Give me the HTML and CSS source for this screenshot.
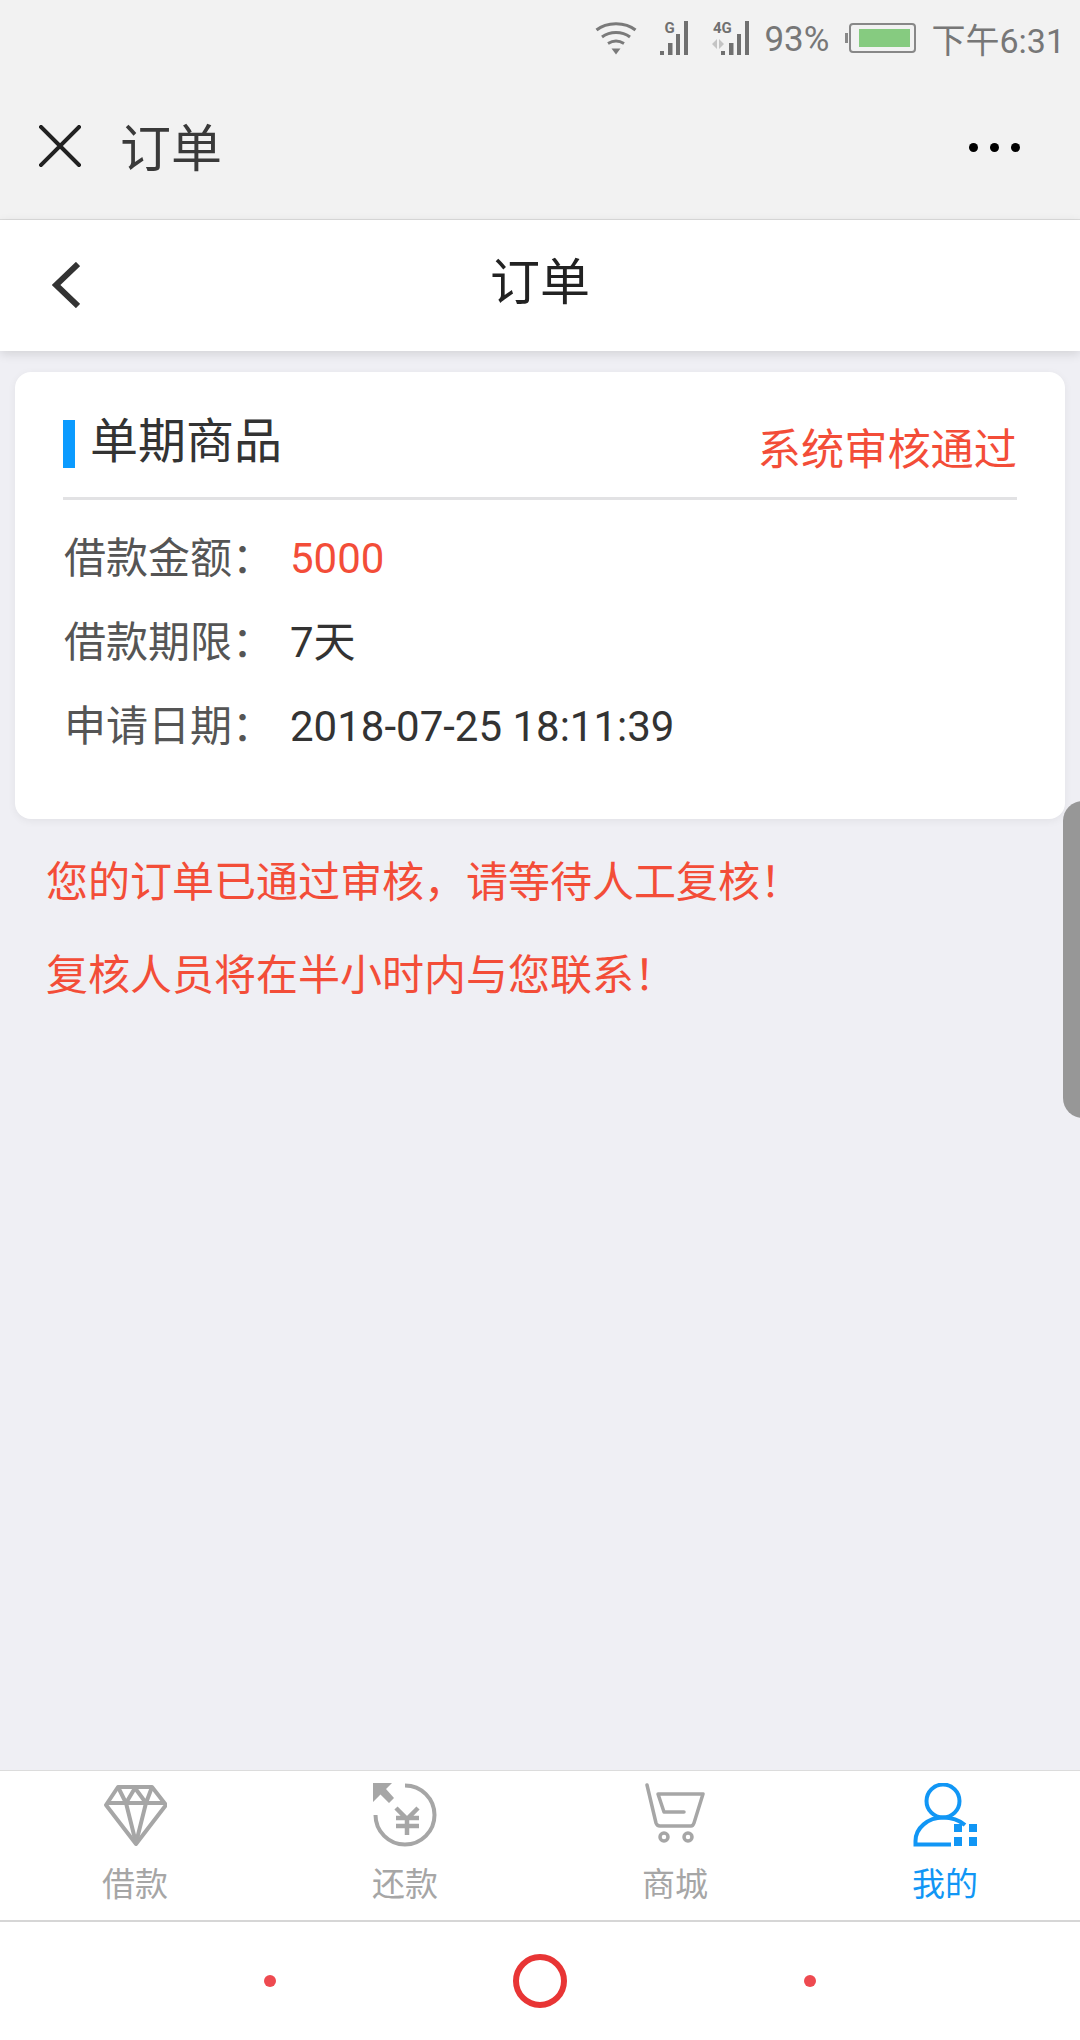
FILE: index.html
```html
<!DOCTYPE html>
<html lang="zh-CN">
<head>
  <meta charset="UTF-8" />
  <title>订单</title>
  <link rel="stylesheet" href="styles.css">
</head>
<body>
  <div class="phone">
    <div class="statusbar">
      <svg class="ic-wifi" width="42" height="34" viewBox="0 0 42 34" fill="none" stroke="#7a7a7a" stroke-width="3">
        <path d="M1.500 9C11.500 .5 30.500 .5 40.500 9"/>
        <path d="M7 16C15 10 27 10 35 16"/>
        <path d="M13 22.500C18 19.500 24 19.500 29 22.500"/>
        <path d="M16.500 27.500H25.500L21 33.500Z" fill="#7a7a7a" stroke="none"/>
      </svg>
      <svg class="ic-sig ic-sig1" width="28" height="38" viewBox="0 -4 28 38" fill="#707070">
        <text x="4.500" y="12" class="sig-text">G</text>
        <rect x="0" y="30" width="4" height="4"/>
        <rect x="8" y="22" width="4.500" height="12"/>
        <rect x="16" y="13" width="4" height="21"/>
        <rect x="24" y="0" width="4" height="34"/>
      </svg>
      <svg class="ic-sig ic-sig2" width="37" height="38" viewBox="0 -4 37 38" fill="#707070">
        <text x="1" y="12" class="sig-text">4G</text>
        <path d="M5 18V28L0 23ZM7 18L12 23L7 28Z" fill="#c4c4c4"/>
        <rect x="9" y="30" width="4" height="4"/>
        <rect x="17" y="22" width="4.500" height="12"/>
        <rect x="25" y="13" width="4" height="21"/>
        <rect x="33" y="0" width="4" height="34"/>
      </svg>
      <span class="st-pct">93%</span>
      <div class="battery"><div class="battery-fill"></div></div>
      <span class="st-time">下午6:31</span>
    </div>

    <div class="appbar">
      <svg class="ic-close" width="42" height="42" viewBox="0 0 42 42" stroke="#222" stroke-width="4" stroke-linecap="square">
        <path d="M2 2L40 40M40 2L2 40"/>
      </svg>
      <span class="appbar-title">订单</span>
      <div class="more"><i></i><i></i><i></i></div>
    </div>

    <div class="subheader">
      <svg class="ic-back" width="28" height="46" viewBox="0 0 28 46" fill="none" stroke="#333" stroke-width="6">
        <path d="M26 2L4 23L26 44"/>
      </svg>
      <span class="subheader-title">订单</span>
    </div>

    <div class="content">
      <div class="card">
        <div class="card-head">
          <div class="card-title">单期商品</div>
          <div class="card-status">系统审核通过</div>
        </div>
        <div class="row"><span class="row-label">借款金额：</span><span class="row-value red">5000</span></div>
        <div class="row"><span class="row-label">借款期限：</span><span class="row-value">7天</span></div>
        <div class="row"><span class="row-label">申请日期：</span><span class="row-value">2018-07-25 18:11:39</span></div>
      </div>
      <p class="msg">您的订单已通过审核，请等待人工复核！</p>
      <p class="msg">复核人员将在半小时内与您联系！</p>
    </div>

    <div class="tabbar">
      <div class="tab">
        <svg width="64" height="64" viewBox="0 0 64 64" fill="none" stroke="#a6a6a6" stroke-width="4" stroke-linejoin="round">
          <path d="M15 4H49L63 22L33 61L3 22Z"/>
          <path d="M5 20H61M15 4L23 20L32 5L43 20L49 4M23 20L33 60L43 20"/>
        </svg>
        <span>借款</span>
      </div>
      <div class="tab">
        <svg width="64" height="64" viewBox="0 0 64 64" fill="none" stroke="#a6a6a6" stroke-width="4">
          <path d="M32 2.500A29.500 29.500 0 1 1 2.500 32"/>
          <path d="M0 0H19L13 6L21 15L16 20L7.500 11.500L0 19Z" fill="#a6a6a6" stroke="none"/>
          <path d="M23 25L34 36L45 25M23 35H46M23 43H46M34 36V52" stroke-width="4.500"/>
        </svg>
        <span>还款</span>
      </div>
      <div class="tab">
        <svg width="64" height="64" viewBox="0 0 64 64" fill="none" stroke="#a6a6a6" stroke-width="3.500" stroke-linecap="round" stroke-linejoin="round">
          <path d="M4 2L13 40Q14 43 17 43H48Q50 43 51 40L60 11H15L21 29H41"/>
          <circle cx="21" cy="54" r="4"/>
          <circle cx="45" cy="54" r="4"/>
        </svg>
        <span>商城</span>
      </div>
      <div class="tab active">
        <svg width="64" height="64" viewBox="0 0 64 64" fill="none" stroke="#1196f5" stroke-width="4">
          <circle cx="30" cy="18" r="16.500"/>
          <path d="M38 61.500H2.500V58C2.500 45 15 34.500 30 34.500C38 34.500 46 37 52 42"/>
          <g fill="#1196f5" stroke="none">
            <rect x="41" y="41" width="8" height="8"/>
            <rect x="56" y="41" width="8" height="8"/>
            <rect x="41" y="54" width="8" height="9"/>
            <rect x="56" y="54" width="8" height="9"/>
          </g>
        </svg>
        <span>我的</span>
      </div>
    </div>

    <div class="navbar">
      <i class="nav-dot"></i>
      <i class="nav-ring"></i>
      <i class="nav-dot"></i>
    </div>

    <div class="side-handle"></div>
  </div>
</body>
</html>
```

FILE: styles.css
```css
:root {
  --top-bg: #f2f2f2; --page-bg: #efeff4;
  --red: #f34d38; --blue: #1196f5;
  --text: #333; --text-secondary: #555; --gray: #a6a6a6;
}
body {
  margin: 0;
  font-family: Roboto, "Noto Sans CJK SC", sans-serif;
  color: var(--text);
}
.phone {
  position: relative;
  width: 1080px; height: 2040px;
  display: flex; flex-direction: column;
  overflow: hidden;
  background: var(--page-bg);
}

/* status bar */
.statusbar {
  height: 70px; flex: none;
  padding: 6px 15px 0 0; box-sizing: border-box;
  background: var(--top-bg);
  display: flex; align-items: center; justify-content: flex-end;
  color: #777; font-size: 34px;
}
.ic-sig { margin-top: -4px; }
.ic-sig1 { margin-left: 23px; }
.ic-sig2 { margin-left: 24px; }
.sig-text { font: bold 15px Roboto, sans-serif; }
.st-pct { margin: 2px 0 0 15px; font-size: 35px; }
.battery {
  position: relative;
  width: 67px; height: 30px;
  margin-left: 20px;
  border: 2px solid #888; border-radius: 4px;
  box-sizing: border-box;
  display: flex; align-items: center; justify-content: flex-end;
  padding-right: 4px;
}
.battery::before {
  content: ""; position: absolute;
  left: -6px; top: 8px;
  width: 3px; height: 10px;
  background: #888;
}
.battery-fill { width: 51px; height: 18px; background: #86cb80; }
.st-time { margin-left: 15px; }

/* app bar */
.appbar {
  height: 150px; flex: none;
  box-sizing: border-box;
  padding: 0 60px 0 39px;
  background: var(--top-bg);
  border-bottom: 1px solid #dcdcdc;
  display: flex; align-items: center;
}
.ic-close { margin-top: 2px; }
.appbar-title { margin-left: 39px; font-size: 51px; color: #3a3a3a; }
.more { margin: 6px 0 0 auto; display: flex; gap: 12px; }
.more i { width: 9px; height: 9px; border-radius: 50%; background: #000; }

/* sub header */
.subheader {
  position: relative; z-index: 1;
  height: 131px; flex: none;
  padding-bottom: 15px; box-sizing: border-box;
  background: #fff;
  box-shadow: 0 3px 10px rgba(0,0,0,0.12);
  display: flex; align-items: center; justify-content: center;
}
.ic-back { position: absolute; left: 52px; top: 42px; }
.subheader-title { font-size: 50px; color: #222; }

/* content */
.content { flex: 1; padding: 21px 15px 0; }
.card {
  height: 447px; box-sizing: border-box;
  padding: 0 48px;
  background: #fff;
  border-radius: 16px;
  box-shadow: 0 2px 8px rgba(0,0,0,0.06);
}
.card-head {
  height: 128px; box-sizing: border-box;
  margin-bottom: 17px;
  padding-top: 48px;
  border-bottom: 3px solid #e2e2e4;
  display: flex; justify-content: space-between; align-items: flex-start;
}
.card-title {
  height: 48px; line-height: 44px;
  padding-left: 15px;
  border-left: 12px solid #0b9bff;
  font-size: 48px;
}
.card-status { margin-top: 3px; line-height: 56px; font-size: 43.200px; color: var(--red); }
.row {
  height: 84px; line-height: 84px;
  display: flex; align-items: baseline;
  font-size: 42px;
}
.row-label { width: 227px; padding-left: 1px; box-sizing: border-box; color: var(--text-secondary); }
.row-value { color: var(--text); }
.row-value.red { color: var(--red); }
.msg {
  margin: 33px 0 0 31px;
  line-height: 60px;
  font-size: 42px; color: var(--red);
}
.card + .msg { margin-top: 34px; }

/* tab bar */
.tabbar {
  height: 150px; flex: none;
  box-sizing: border-box;
  background: #fff;
  border-top: 1px solid #dcdcdc;
  display: grid; grid-template-columns: repeat(4, 1fr);
}
.tab {
  display: flex; flex-direction: column; align-items: center;
  padding-top: 12px;
  font-size: 33px; color: var(--gray);
}
.tab span { margin-top: 18px; line-height: 40px; }
.tab.active { color: var(--blue); }

/* system nav */
.navbar {
  height: 120px; flex: none;
  box-sizing: border-box;
  background: #fff;
  border-top: 2px solid #d6d6d6;
  display: flex; align-items: center; justify-content: center;
  gap: 237px;
}
.nav-dot { width: 12px; height: 12px; border-radius: 50%; background: #ee4a50; }
.nav-ring {
  width: 54px; height: 54px;
  box-sizing: border-box;
  border: 6px solid #e83535; border-radius: 50%;
}

.side-handle {
  position: absolute;
  left: 1063px; top: 801px;
  width: 40px; height: 317px;
  background: #979797;
  border-radius: 24px;
}
```
